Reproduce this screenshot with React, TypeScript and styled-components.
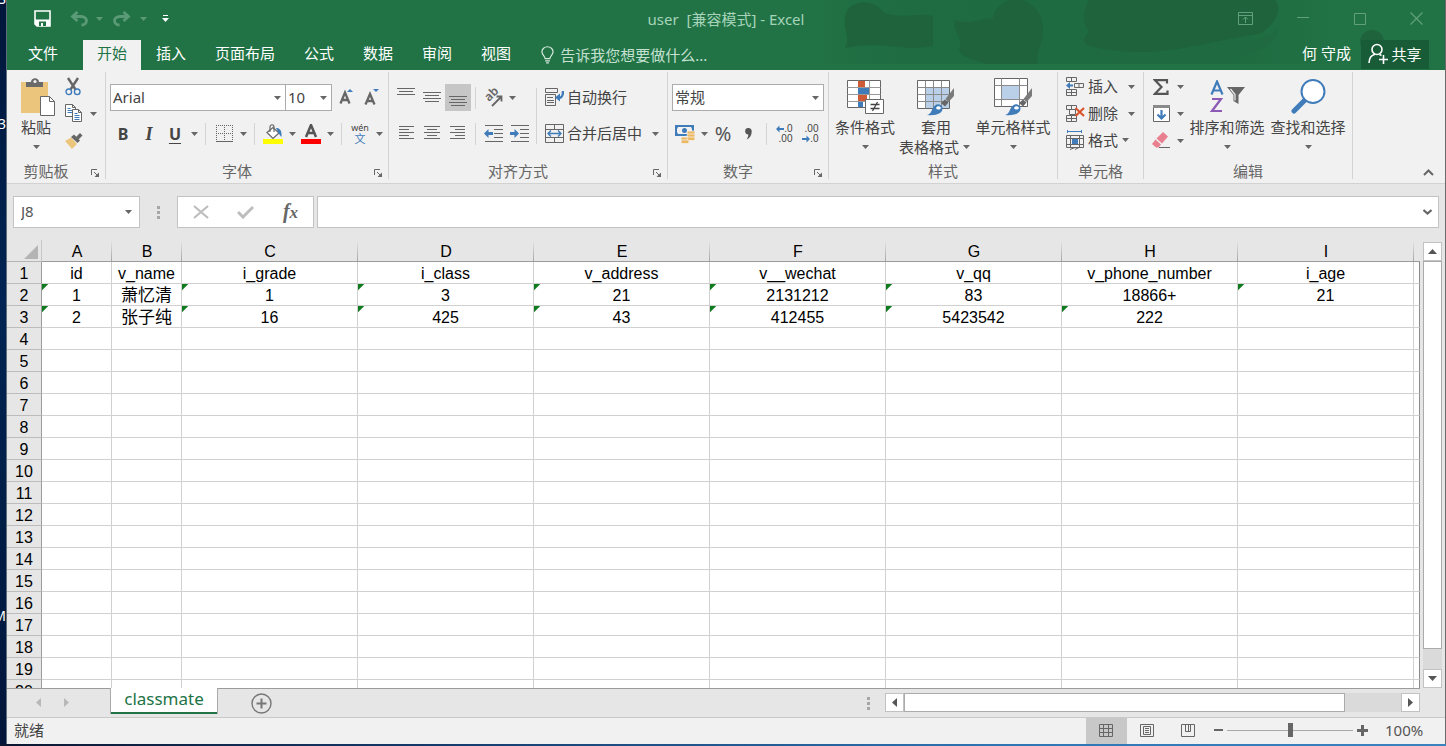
import React from "react";
import styled, { createGlobalStyle, css } from "styled-components";

const GlobalStyle = createGlobalStyle`
  *, *::before, *::after { box-sizing: border-box; }
  html, body, #root { height: 100%; }
  body {
    margin: 0;
    overflow: hidden;
    color: #444;
    font: 15px/20px "Noto Sans", "Noto Sans CJK SC", sans-serif;
  }
  button, input, select { font: inherit; color: inherit; margin: 0; }
  svg { display: block; flex: none; }
`;

/* ---------- shell ---------- */

const Desktop = styled.div`
  display: flex;
  height: 100%;
  padding-bottom: 2px;
  background: linear-gradient(90deg, #0b1630 0%, #143a6b 30%, #2f76b5 70%, #3b83bf 100%);
`;
const DesktopEdge = styled.div`
  position: relative;
  width: 7px;
  flex: none;
  overflow: hidden;
  background: linear-gradient(#00163a, #002453 40%, #001c44 75%, #03153a);
  border-right: 1px solid #5d6f7d;
`;
const DesktopText = styled.span<{ $top: number }>`
  position: absolute;
  right: 0;
  top: ${(p) => p.$top}px;
  color: #fff;
  font-size: 14px;
`;
const Window = styled.div`
  flex: 1;
  min-width: 0;
  display: flex;
  flex-direction: column;
  background: #e6e6e6;
  border-right: 1px solid #6b6b6b;
`;

const plainButton = css`
  display: flex;
  align-items: center;
  justify-content: center;
  padding: 0;
  border: 0;
  background: none;
  white-space: nowrap;
  cursor: default;
`;

/* ---------- title and tabs ---------- */

const Header = styled.header`
  position: relative;
  background: #217346;
  color: #fff;
`;
const HeaderArt = styled.svg`
  position: absolute;
  right: 0;
  top: 0;
`;
const TitleBar = styled.div`
  position: relative;
  display: grid;
  grid-template-columns: 1fr auto 1fr;
  align-items: center;
  height: 40px;
  padding-bottom: 3px;
`;
const QuickAccess = styled.div`
  display: flex;
  align-items: center;
  padding-left: 14px;
`;
const QuickButton = styled.button<{ $w: number; $dim?: boolean }>`
  ${plainButton}
  width: ${(p) => p.$w}px;
  height: 30px;
  color: ${(p) => (p.$dim ? "#5b9a76" : "#fff")};
`;
const Title = styled.h1`
  margin: 0;
  font-size: 15px;
  line-height: 20px;
  font-weight: 400;
  color: #a6d3b9;
  white-space: pre;
`;
const WindowButtons = styled.div`
  display: flex;
  justify-content: flex-end;
`;
const WindowButton = styled.button`
  ${plainButton}
  width: 57px;
  height: 36px;
  color: #62a07d;
`;
const TabBar = styled.nav`
  position: relative;
  display: flex;
  gap: 1px;
  height: 30px;
`;
const Tab = styled.button<{ $active?: boolean; $file?: boolean }>`
  ${plainButton}
  padding: 0 ${(p) => (p.$file ? 21 : 14)}px 4px;
  margin-right: ${(p) => (p.$file ? 3 : 0)}px;
  background: ${(p) => (p.$active ? "#f1f1f1" : "transparent")};
  color: ${(p) => (p.$active ? "#217346" : "#fff")};
`;
const TellMe = styled.button`
  ${plainButton}
  gap: 6px;
  margin-left: 15px;
  color: #c4e0d0;
`;
const Account = styled.button`
  ${plainButton}
  margin-left: auto;
  padding: 0 9px 4px;
  color: #fff;
`;
const Share = styled.button`
  ${plainButton}
  gap: 3px;
  width: 68px;
  height: 29px;
  padding-bottom: 2px;
  margin-right: 16px;
  background: #185c37;
  color: #fff;
`;

/* ---------- ribbon ---------- */

const Ribbon = styled.section`
  display: flex;
  flex: none;
  height: 114px;
  background: #f1f1f1;
  border-bottom: 1px solid #d2d2d2;
`;
const GroupBox = styled.div<{ $w: number }>`
  display: flex;
  flex-direction: column;
  flex: none;
  width: ${(p) => p.$w}px;
  margin: 2px 0 4px;
  border-right: 1px solid #d4d4d4;
`;
const GroupBody = styled.div<{ $pad: number }>`
  display: flex;
  flex: 1;
  padding-left: ${(p) => p.$pad}px;
`;
const GroupFoot = styled.div`
  display: flex;
  height: 18px;
  line-height: 20px;
  color: #666;
`;
const GroupName = styled.span`
  flex: 1;
  text-align: center;
`;
const Launcher = styled.button`
  ${plainButton}
  width: 20px;
  height: 24px;
`;
const Rows = styled.div`
  display: flex;
  flex-direction: column;
  gap: 9px;
  padding-top: 12px;
`;
const Row = styled.div`
  display: flex;
  align-items: center;
  height: 27px;
`;
const Stack = styled.div`
  display: flex;
  flex-direction: column;
  align-items: flex-start;
  padding-top: 1px;
`;
const Tool = styled.button<{ $on?: boolean }>`
  ${plainButton}
  width: 26px;
  height: 27px;
  background: ${(p) => (p.$on ? "#c6c6c6" : "none")};
`;
const Letter = styled.span<{ $kind: "bold" | "italic" | "underline" }>`
  font-weight: 700;
  font-size: 16px;
  ${(p) => p.$kind === "italic" && css`font-family: "Liberation Serif", serif; font-style: italic; font-size: 18px;`}
  ${(p) => p.$kind === "underline" && css`text-decoration: underline; text-underline-offset: 3px;`}
`;
const Percent = styled.span`
  font-size: 20px;
  color: #555;
`;
const DropButton = styled.button<{ $space?: number }>`
  ${plainButton}
  width: 12px;
  height: 27px;
  margin-left: ${(p) => p.$space ?? 0}px;
`;
const LabelTool = styled.button`
  ${plainButton}
  height: 27px;
  padding-bottom: 1px;
`;
const IconCell = styled.span<{ $w?: number }>`
  display: flex;
  justify-content: center;
  width: ${(p) => p.$w ?? 26}px;
`;
const Rule = styled.span<{ $gap: number; $h?: number; $top?: number }>`
  width: 1px;
  height: ${(p) => p.$h ?? 22}px;
  margin: ${(p) => p.$top ?? 0}px ${(p) => p.$gap}px 0;
  background: #d4d4d4;
`;
const BigButton = styled.button<{ $w: number }>`
  ${plainButton}
  flex-direction: column;
  justify-content: flex-start;
  width: ${(p) => p.$w}px;
  padding-top: 5px;
`;
const BigIcon = styled.span`
  display: flex;
  align-items: center;
  height: 40px;
`;
const BigLine = styled.span`
  display: flex;
  align-items: center;
  height: 20px;
`;
const Combo = styled.span<{ $w: number; $join?: boolean }>`
  position: relative;
  display: block;
  width: ${(p) => p.$w}px;
  height: 27px;
  margin-left: ${(p) => (p.$join ? -1 : 0)}px;
`;
const ComboSelect = styled.select`
  appearance: none;
  width: 100%;
  height: 100%;
  padding: 0 18px 2px 2px;
  border: 1px solid #ababab;
  border-radius: 0;
  background: #fff;
`;
const ComboArrow = styled.span`
  position: absolute;
  right: 5px;
  top: 12px;
  pointer-events: none;
`;
const Collapse = styled.button`
  ${plainButton}
  align-self: flex-end;
  width: 33px;
  height: 21px;
  margin-left: auto;
`;

/* ---------- formula bar ---------- */

const FormulaBar = styled.div`
  display: flex;
  flex: none;
  height: 56px;
  padding: 12px 6px;
`;
const Field = styled.div<{ $w?: number }>`
  display: flex;
  ${(p) => (p.$w ? css`width: ${p.$w}px; flex: none;` : css`flex: 1; min-width: 0; margin-left: 3px;`)}
  border: 1px solid #c3c3c3;
  background: #fff;
`;
const FieldInput = styled.input`
  flex: 1;
  min-width: 0;
  padding: 0 6px 2px 7px;
  border: 0;
  background: none;
  outline: none;
  color: #555;
`;
const FieldButton = styled.button<{ $w: number }>`
  ${plainButton}
  width: ${(p) => p.$w}px;
`;
const Fx = styled.span`
  font: italic 700 20px/24px "Liberation Serif", serif;
  color: #666;
`;
const FxSmall = styled.span`
  font-size: 17px;
`;
const Grip = styled.span<{ $w: number }>`
  display: flex;
  align-items: center;
  justify-content: center;
  width: ${(p) => p.$w}px;
`;

/* ---------- sheet ---------- */

const Work = styled.main`
  display: flex;
  flex: 1;
  min-height: 0;
`;
const GridView = styled.div`
  flex: 1;
  min-width: 0;
  overflow: hidden;
`;
const Table = styled.table`
  width: 100%;
  table-layout: fixed;
  border-collapse: separate;
  border-spacing: 0;
  color: #000;
  font: 16px/19px "Liberation Sans", "Noto Sans CJK SC", sans-serif;
`;
const Col = styled.col<{ $w?: number }>`
  ${(p) => p.$w && css`width: ${p.$w}px;`}
`;
const ColHead = styled.th`
  height: 22px;
  padding: 2px 0 0;
  font-weight: 400;
  background: linear-gradient(#e6e6e6, #a5a5a5) right / 1px 100% no-repeat, #e6e6e6;
  border-bottom: 1px solid #9b9b9b;
  &:last-child { background: #e6e6e6; }
`;
const Corner = styled(ColHead)`
  background: #e6e6e6;
  border-bottom-color: #b5b5b5;
  border-right: 1px solid #c6c6c6;
`;
const CornerMark = styled.svg`
  margin-left: auto;
  margin-right: 3px;
`;
const RowHead = styled.th`
  height: 22px;
  padding: 2px 0 0;
  font-weight: 400;
  background: #e6e6e6;
  border-right: 1px solid #9b9b9b;
  border-bottom: 1px solid #bcbcbc;
`;
const Cell = styled.td<{ $flag?: boolean }>`
  height: 22px;
  padding: 2px 0 0;
  overflow: hidden;
  text-align: center;
  white-space: nowrap;
  background: ${(p) => (p.$flag ? "linear-gradient(135deg, #0f7b1f 4px, transparent 5px) #fff" : "#fff")};
  border-right: 1px solid #d0d0d0;
  border-bottom: 1px solid #d0d0d0;
  &:last-child { border-right-color: #8c8c8c; }
  &:lang(zh) { font-size: 17px; }
`;
const ScrollColumn = styled.div`
  display: flex;
  flex-direction: column;
  flex: none;
  width: 25px;
  padding: 2px 3px 0;
`;
const ScrollButton = styled.button`
  ${plainButton}
  flex: none;
  width: 19px;
  height: 19px;
  background: #fff;
  border: 1px solid #c2c2c2;
`;
const VTrack = styled.div`
  display: flex;
  flex-direction: column;
  flex: 1;
  background: #dadada;
`;
const VThumb = styled.div`
  height: 95%;
  background: #fff;
  border: 1px solid #ababab;
`;

/* ---------- sheet tabs and status ---------- */

const SheetBar = styled.div`
  display: flex;
  flex: none;
  height: 29px;
`;
const SheetLeft = styled.div`
  display: flex;
  flex: 1;
  border-top: 1px solid #9b9b9b;
`;
const SheetNav = styled.div`
  display: flex;
  width: 103px;
  padding-left: 17px;
  padding-bottom: 1px;
`;
const NavButton = styled.button`
  ${plainButton}
  width: 28px;
`;
const SheetTab = styled.button`
  ${plainButton}
  width: 108px;
  height: 26px;
  margin-top: -1px;
  background: #fff;
  border: solid #ababab;
  border-width: 0 1px;
  box-shadow: inset 0 -2px #217346;
  color: #217346;
  font-size: 17px;
  padding-bottom: 5px;
`;
const AddSheet = styled.button`
  ${plainButton}
  width: 86px;
`;
const SheetRight = styled.div`
  display: flex;
  border-top: 1px solid #9b9b9b;
`;
const HScroll = styled.div`
  display: flex;
  width: 535px;
  padding-top: 4px;
`;
const HTrack = styled.div`
  flex: 1;
  height: 19px;
  background: #dadada;
`;
const HThumb = styled.div`
  width: 441px;
  height: 19px;
  background: #fff;
  border: 1px solid #ababab;
`;
const SheetEnd = styled.div`
  width: 25px;
`;
const Status = styled.footer`
  display: flex;
  align-items: center;
  flex: none;
  height: 27px;
  padding-left: 7px;
  background: #f1f1f1;
  border-top: 1px solid #c9c9c9;
`;
const StatusText = styled.span`
  margin-right: auto;
  padding-bottom: 3px;
`;
const ViewButton = styled.button<{ $on?: boolean }>`
  ${plainButton}
  width: 41px;
  height: 26px;
  padding: 0 2px 2px 0;
  background: ${(p) => (p.$on ? "#c8c8c8" : "none")};
`;
const ZoomStep = styled.button`
  ${plainButton}
  width: 18px;
  height: 26px;
  padding-bottom: 2px;
`;
const ZoomRange = styled.input`
  appearance: none;
  width: 126px;
  height: 20px;
  margin-bottom: 2px;
  background: linear-gradient(#a8a8a8, #a8a8a8) center / 100% 1px no-repeat;
  &::-webkit-slider-thumb {
    appearance: none;
    width: 5px;
    height: 14px;
    background: #666;
  }
`;
const ZoomValue = styled.span`
  width: 74px;
  padding: 0 0 2px 14px;
  color: #555;
`;

/* ---------- drawings ---------- */

const G = "#666";
const B = "#3f7cb9";

const Caret = ({ color = G }: { color?: string }) => (
  <svg width="7" height="4" viewBox="0 0 7 4"><path d="M0 0h7L3.5 4z" fill={color} /></svg>
);

const LauncherIcon = () => (
  <svg width="8" height="8" viewBox="0 0 8 8" fill="none" stroke={G}>
    <path d="M.5 6V.5H6M3 3l3 3" /><path d="M8 3.5V8H3.5z" fill={G} stroke="none" />
  </svg>
);

const Lines = ({ widths, align }: { widths: number[]; align: "left" | "center" | "right" }) => (
  <svg width="18" height={widths.length * 3} viewBox={`0 0 18 ${widths.length * 3}`} fill={G} shapeRendering="crispEdges">
    {widths.map((w, i) => (
      <rect key={i} x={align === "left" ? 2 : align === "right" ? 16 - w : (18 - w) / 2} y={i * 3} width={w} height="1" />
    ))}
  </svg>
);

const VerticalAlign = ({ y }: { y: number }) => (
  <svg width="18" height="27" viewBox="0 0 18 27" fill={G} shapeRendering="crispEdges">
    <rect x="0" y={y} width="18" height="1" /><rect x="2" y={y + 3} width="14" height="1" /><rect x="0" y={y + 6} width="18" height="1" />
    {y > 4 && <rect x="2" y={y + 9} width="14" height="1" />}
  </svg>
);

const SaveIcon = () => (
  <svg width="17" height="17" viewBox="0 0 17 17">
    <path d="M1 1h15v15H3l-2-2z" fill="none" stroke="#fff" strokeWidth="1.600" />
    <path d="M1 9.500h15V16H3l-2-2z" fill="#fff" /><path d="M5 11.500h7V16H5z" fill="#217346" /><path d="M7 13h2v3H7z" fill="#fff" />
  </svg>
);

const UndoIcon = ({ flip }: { flip?: boolean }) => (
  <svg width="19" height="16" viewBox="0 0 19 16" fill="none" stroke="currentColor" strokeWidth="2.800">
    <g transform={flip ? "translate(19 0) scale(-1 1)" : undefined}>
      <path d="M7.500 1L2.500 5.500l5 4.500M3 5.500h8c3.500 0 5.500 2 5.500 4.300s-2 4.200-5 4.200" />
    </g>
  </svg>
);

const PersonIcon = () => (
  <svg width="20" height="21" viewBox="0 0 20 21" fill="none" stroke="#fff" strokeWidth="1.600">
    <circle cx="9" cy="6.500" r="5" /><path d="M1 20c.2-5 2.500-8 6-8.800M11.500 11.500l2 1M15.500 12v9M11 16.500h9" />
  </svg>
);

const BulbIcon = () => (
  <svg width="13" height="18" viewBox="0 0 14 19" fill="none" stroke="#d6eade" strokeWidth="1.300">
    <path d="M4.500 13.500c0-3-3.500-4-3.500-7.500a6 5.400 0 0 1 12 0c0 3.500-3.500 4.500-3.500 7.500zM4.500 15.800h5M5.500 18h3" />
  </svg>
);

const PasteIcon = () => (
  <svg width="38" height="39" viewBox="-4 0 38 39">
    <path d="M0 4h27v31H0z" fill="#ecc57c" />
    <path d="M5 9V4h5c0-5 8-5 8 0h4v5z" fill="#6a6a6a" /><circle cx="14" cy="3.500" r="1.600" fill="#f1f1f1" />
    <path d="M19.500 18.500h9l5 5v14h-14z" fill="#fff" stroke={G} /><path d="M28.500 18.500v5h5" fill="none" stroke={G} />
  </svg>
);

const CutIcon = () => (
  <svg width="18" height="19" viewBox="0 0 18 19" fill="none">
    <path d="M3 1l7.500 11.500M13 1L5.500 12.500" stroke="#666" strokeWidth="2.400" />
    <circle cx="3.800" cy="14.800" r="2.800" stroke={B} strokeWidth="1.400" /><circle cx="12.200" cy="14.800" r="2.800" stroke={B} strokeWidth="1.400" />
  </svg>
);

const CopyIcon = () => (
  <svg width="18" height="19" viewBox="0 0 18 19" fill="#fff" stroke={G}>
    <path d="M.5.500h7l3 3v9H.5zM7.500.500v3h3" /><path d="M2.500 4.500h3M2.500 6.500h5M2.500 8.500h5" stroke={B} />
    <path d="M7.500 5.500h6l3 3v9h-9zM13.500 5.500v3h3" /><path d="M9.500 9.500h3M9.500 11.500h5M9.500 13.500h5M9.500 15.500h5" stroke={B} />
  </svg>
);

const BrushIcon = () => (
  <svg width="18" height="16" viewBox="0 0 18 16">
    <path d="M0 8l6-3.500L12 11l-5 5z" fill="#ecc57c" /><path d="M6 4l3-2.500 6 6L12.500 10z" fill={G} /><path d="M11 4l4-4 2.500 2.500-4 4z" fill={G} />
  </svg>
);

const FontSizeIcon = ({ down }: { down?: boolean }) => (
  <svg width="16" height="17" viewBox="0 0 16 17">
    <path d={down ? "M2.500 15.500L7 5l4.500 10.500M4 12h6" : "M3.500 14.500L8 3.500l4.500 11M5 11h6"} fill="none" stroke={G} strokeWidth="2.300" />
    <path d={down ? "M10 0h6l-3 3z" : "M10 3h6l-3-3z"} fill={B} />
  </svg>
);

const BorderIcon = () => (
  <svg width="17" height="17" viewBox="0 0 17 17" fill="none" stroke={G} shapeRendering="crispEdges">
    <path d="M.5 0v16M8.500 0v16M16.500 0v16M0 .5h17M0 8.500h17" strokeDasharray="1 1" /><path d="M0 16.500h17" />
  </svg>
);

const FillIcon = () => (
  <svg width="20" height="20" viewBox="0 0 20 20" fill="none">
    <path d="M0 15h20v5H0z" fill="#ff0" /><path d="M4 8.500l6-5 6 5.500-6 5.500z" fill="#fff" stroke={G} strokeWidth="1.200" />
    <path d="M7 8V3c0-3 4-3 4 0v5" stroke={G} strokeWidth="1.200" /><path d="M13 4c4 0 6 2.500 5.500 9-1.500-1-2-3-3.500-5z" fill={B} />
  </svg>
);

const FontColorIcon = () => (
  <svg width="20" height="20" viewBox="0 0 20 20">
    <path d="M5 13L10 1l5 12M7 9h6" fill="none" stroke="#555" strokeWidth="2.500" /><path d="M0 15h20v5H0z" fill="#f00" />
  </svg>
);

const PhoneticBox = styled.span`
  display: flex;
  flex-direction: column;
  align-items: center;
  font-size: 9px;
  line-height: 10px;
`;
const PhoneticHan = styled.span`
  font-size: 11px;
  line-height: 12px;
  color: ${B};
`;

const OrientIcon = () => (
  <svg width="20" height="19" viewBox="0 0 20 19">
    <text x="0" y="0" transform="translate(6 14) rotate(-45)" fontSize="12" fontWeight="600" fill={G}>ab</text>
    <path d="M9 18l9-9M13.500 8.500h5v5" fill="none" stroke={G} strokeWidth="1.800" />
  </svg>
);

const IndentIcon = ({ right }: { right?: boolean }) => (
  <svg width="19" height="17" viewBox="0 0 19 17">
    <path d="M1 .5h18M10 4.500h9M10 8.500h9M10 12.500h9M1 16.500h18" stroke={G} />
    <path d={right ? "M9 8.500L4.500 4v3H0v3h4.500v3z" : "M0 8.500L4.500 4v3H9v3H4.500v3z"} fill={B} />
  </svg>
);

const WrapIcon = () => (
  <svg width="19" height="18" viewBox="0 0 19 18" fill="none" stroke={G}>
    <path d="M11 .5H.5v4h12v-4zM.5 6.500h10v11H.5zM2 9.500h6M2 12.500h7M2 14.500h7" />
    <path d="M18 3c0 5-1 7-5 7" stroke={B} strokeWidth="2.400" /><path d="M10 9.500l5-4v8z" fill={B} stroke="none" />
  </svg>
);

const MergeIcon = () => (
  <svg width="19" height="19" viewBox="0 0 19 19" fill="none" stroke={G}>
    <path d="M.5.500h18v18H.5zM.5 5.500h18M.5 13.500h18M9.500.500v5M9.500 13.500v5" /><path d="M3 9.500h13M6 6.500l-3 3 3 3M13 6.500l3 3-3 3" stroke={B} strokeWidth="1.400" />
  </svg>
);

const CurrencyIcon = () => (
  <svg width="20" height="20" viewBox="0 0 20 20">
    <path d="M0 1h19v11H0z" fill={B} /><path d="M3 3h13l1 2v3l-2 2H3L2 8V5z" fill="#f1f1f1" /><circle cx="9.500" cy="6.500" r="2.500" fill={B} />
    <g fill="#ecb861" stroke="#f1f1f1" strokeWidth=".8"><rect x="12" y="7" width="8" height="3.500" rx="1.500" /><rect x="12" y="10" width="8" height="3.500" rx="1.500" /><rect x="6" y="13" width="8" height="3.500" rx="1.500" /><rect x="12" y="13" width="8" height="3.500" rx="1.500" /><rect x="6" y="16" width="8" height="3.500" rx="1.500" /></g>
  </svg>
);

const CommaIcon = () => (
  <svg width="8" height="12" viewBox="0 0 8 12"><path d="M3.500 0a3.200 3.200 0 0 1 3.200 3.500c0 4-2 6.500-5 8 1.200-2 1.700-3.500 1.600-5A3.200 3.200 0 0 1 3.500 0z" fill="#555" /></svg>
);

const DecimalBox = styled.span`
  display: flex;
  flex-direction: column;
  align-items: flex-end;
  width: 17px;
  font: 10px/10px "Liberation Sans", sans-serif;
  color: #444;
`;
const DecimalLine = styled.span`
  display: flex;
  align-items: center;
  height: 10px;
`;
const DecimalIcon = ({ less }: { less?: boolean }) => {
  const arrow = (
    <svg width="8" height="8" viewBox="0 0 8 8"><path d={less ? "M8 4L4.500.500V3H0v2h4.500v2.500z" : "M0 4L3.500.500V3H8v2H3.500v2.500z"} fill={B} /></svg>
  );
  return (
    <DecimalBox>
      <DecimalLine>{less ? ".00" : <>{arrow}.0</>}</DecimalLine>
      <DecimalLine>{less ? <>{arrow}.0</> : ".00"}</DecimalLine>
    </DecimalBox>
  );
};

const ConditionalIcon = () => (
  <svg width="37" height="34" viewBox="0 0 37 34" fill="none">
    <path d="M.5.500h33v27H.5z" fill="#fff" stroke={G} /><path d="M.5 7.500h33M.5 14.500h33M.5 21.500h33M11.500.500v27M22.500.500v27" stroke="#999" />
    <path d="M11 1h7v6h-7zM11 15h9v6h-9z" fill="#cf5b36" /><path d="M11 8h11v6H11zM11 22h5v5h-5z" fill={B} />
    <path d="M18.500 19.500h18v14h-18z" fill="#fff" stroke={G} /><path d="M23.500 24.500h9M23.500 28.500h9M30.500 22l-5 9" stroke="#444" strokeWidth="1.300" />
  </svg>
);

const PaintBrush = () => (
  <g>
    <path d="M37 9L28.500 20l3 3L37 17z" fill="#7a7a7a" /><path d="M28 20.500l3.500 3-3.500 4-4-3.500z" fill={G} />
    <path d="M10 36c5-1 4-6 8-9.500 3-2.500 7-.5 7.500 2.500C26 34 20 37 10 36z" fill={B} /><path d="M19 29c1-2.500 4-2.500 5 0-1 2-4 2-5 0z" fill="#fff" />
  </g>
);

const TableFormatIcon = () => (
  <svg width="38" height="37" viewBox="0 0 38 37" fill="none">
    <path d="M.5 1.500h32v28H.5z" fill="#fff" stroke={G} /><path d="M9 9h23v20H9z" fill="#b9d0e8" />
    <path d="M.5 8.500h32M.5 15.500h32M.5 22.500h32M8.500 1.500v28M16.500 1.500v28M24.500 1.500v28" stroke="#8b8b8b" /><PaintBrush />
  </svg>
);

const CellStyleIcon = () => (
  <svg width="38" height="38" viewBox="0 0 38 38" fill="none">
    <path d="M.5.500h33v28H.5z" fill="#fff" stroke={G} /><path d="M8 8h17v13H8z" fill="#b9d0e8" />
    <path d="M.5 7.500h33M.5 21.500h33M7.500.500v28M25.500.500v28" stroke="#8b8b8b" /><g transform="translate(1 1)"><PaintBrush /></g>
  </svg>
);

const InsertIcon = () => (
  <svg width="18" height="19" viewBox="0 0 18 19" fill="none" stroke={G}>
    <path d="M.5.500h10v4H.5zM5.500.500v4M.5 12.500h10v6H.5zM5.500 12.500v6M.5 15.500h10M8.500 6.500h9v4h-9zM13 6.500v4" /><path d="M0 8.500L4 5v2.500h3v2H4V12z" fill={B} stroke="none" />
  </svg>
);

const DeleteIcon = () => (
  <svg width="19" height="17" viewBox="0 0 19 17" fill="none" stroke={G}>
    <path d="M.5.500h10v4H.5zM5.500.500v4M3.500 4.500h6v5h-6zM.5 10.500h10v6H.5zM5.500 10.500v6M.5 13.500h10" /><path d="M9.500 3l8.500 8M18 3l-8.500 8" stroke="#d9532c" strokeWidth="2.200" />
  </svg>
);

const FormatIcon = () => (
  <svg width="18" height="20" viewBox="0 0 18 20" fill="none" stroke={G}>
    <path d="M1 1.500h15M1.500 0v3M15.500 0v3" stroke={B} /><path d="M.5 5.500h17v12H.5zM4.500 5.500v12M13.500 5.500v12M.5 8.500h17M.5 14.500h17M4 19.500l5-2M9 19.500l4-2" /><path d="M6 9h6v5H6z" fill={B} stroke="none" />
  </svg>
);

const SigmaIcon = () => (
  <svg width="16" height="16" viewBox="0 0 16 16"><path d="M14 4.500V1.200H2l6.500 6.800L2 14.800h12.500v-3.300" fill="none" stroke="#555" strokeWidth="2.200" /></svg>
);

const FillDownIcon = () => (
  <svg width="17" height="17" viewBox="0 0 17 17" fill="none">
    <path d="M.5.500h16v16H.5z" fill="#fff" stroke={G} /><path d="M0 0h17v3H0z" fill="#8a8a8a" /><path d="M8.500 5v8M4.500 9.500l4 4 4-4" stroke={B} strokeWidth="2.200" />
  </svg>
);

const EraserIcon = () => (
  <svg width="18" height="17" viewBox="0 0 18 17">
    <path d="M11 0l5 4.500-6 7-5.500-5z" fill="#e8808f" /><path d="M3.500 7.500l5.500 5-2.500 3H4L0 12z" fill="#e8808f" /><path d="M7 15.500h11" stroke={G} />
  </svg>
);

const SortIcon = () => (
  <svg width="36" height="34" viewBox="0 0 36 34" fill="none">
    <path d="M2.500 14.500L8 1.500l5.500 13M4.500 10.500h7" stroke={B} strokeWidth="2.200" /><path d="M3 19h9L3 31h10" stroke="#8c59b5" strokeWidth="2.200" />
    <path d="M18 7h18l-6.500 8v9l-5-3v-6z" fill={G} /><path d="M21.500 9l4.500 5.500v6" stroke="#f1f1f1" strokeWidth="1.200" />
  </svg>
);

const FindIcon = () => (
  <svg width="35" height="36" viewBox="0 1 35 36"><path d="M13.500 22.500L3 33" stroke={B} strokeWidth="5" strokeLinecap="round" /><circle cx="22" cy="13.500" r="11.500" fill="#fff" stroke={B} strokeWidth="2" /></svg>
);

const Arrow = ({ dir, color = "#555" }: { dir: "up" | "down" | "left" | "right"; color?: string }) => {
  const shape = { up: "M0 7h9L4.500 2z", down: "M0 2h9L4.500 7z", left: "M7 0v9L2 4.500z", right: "M2 0v9l5-4.500z" }[dir];
  return <svg width="9" height="9" viewBox="0 0 9 9"><path d={shape} fill={color} /></svg>;
};

const Dots = () => (
  <svg width="3" height="13" viewBox="0 0 3 13" fill="#a6a6a6"><path d="M0 0h3v3H0zM0 5h3v3H0zM0 10h3v3H0z" /></svg>
);

/* ---------- parts ---------- */

type GroupProps = { name: string; width: number; pad?: number; launcher?: boolean; children: React.ReactNode };
const Group = ({ name, width, pad = 4, launcher, children }: GroupProps) => (
  <GroupBox $w={width}>
    <GroupBody $pad={pad}>{children}</GroupBody>
    <GroupFoot>
      <GroupName>{name}</GroupName>
      {launcher && <Launcher aria-label={`${name}设置`}><LauncherIcon /></Launcher>}
    </GroupFoot>
  </GroupBox>
);

const Drop = ({ label, space }: { label: string; space?: number }) => (
  <DropButton aria-label={label} $space={space}><Caret /></DropButton>
);

const ComboBox = ({ label, value, width, join }: { label: string; value: string; width: number; join?: boolean }) => (
  <Combo $w={width} $join={join}>
    <ComboSelect aria-label={label} defaultValue={value}><option>{value}</option></ComboSelect>
    <ComboArrow><Caret /></ComboArrow>
  </Combo>
);

const Big = ({ icon, text, width }: { icon: React.ReactNode; text: string; width: number }) => (
  <BigButton $w={width}><BigIcon>{icon}</BigIcon><BigLine>{text}</BigLine><BigLine><Caret /></BigLine></BigButton>
);

const SheetScroll = () => (
  <SheetRight>
    <Grip $w={34}><Dots /></Grip>
    <HScroll>
      <ScrollButton aria-label="向左滚动"><Arrow dir="left" /></ScrollButton>
      <HTrack><HThumb /></HTrack>
      <ScrollButton aria-label="向右滚动"><Arrow dir="right" /></ScrollButton>
    </HScroll>
  </SheetRight>
);

const tabs = ["插入", "页面布局", "公式", "数据", "审阅", "视图"];
const columns = ["A", "B", "C", "D", "E", "F", "G", "H", "I"];
const columnWidths = [35, 70, 70, 176, 176, 176, 176, 176, 176, 176];
const sheet: string[][] = [
  ["id", "v_name", "i_grade", "i_class", "v_address", "v__wechat", "v_qq", "v_phone_number", "i_age"],
  ["1", "萧忆清", "1", "3", "21", "2131212", "83", "18866+", "21"],
  ["2", "张子纯", "16", "425", "43", "412455", "5423542", "222", ""],
];
const flags: Record<number, number[]> = { 1: [0, 2, 3, 4, 5, 6, 8], 2: [0, 2, 3, 4, 5, 6, 7] };
const rowNumbers = Array.from({ length: 20 }, (_, i) => i);

export default function App() {
  return (
    <>
      <GlobalStyle />
      <Desktop>
        <DesktopEdge aria-hidden>
          <DesktopText $top={-11}>S</DesktopText>
          <DesktopText $top={114}>3</DesktopText>
          <DesktopText $top={606}>M</DesktopText>
        </DesktopEdge>
        <Window>
          <Header>
            <HeaderArt width="640" height="64" viewBox="0 0 640 64" aria-hidden>
              <defs>
                <linearGradient id="shade"><stop offset="0" stopColor="#1f6a40" stopOpacity="0" /><stop offset=".15" stopColor="#1f6c42" /><stop offset=".65" stopColor="#1f6a40" /><stop offset=".85" stopColor="#217346" /></linearGradient>
              </defs>
              <path d="M0 0h640v64H0z" fill="url(#shade)" />
              <g fill="#1f633c">
                <path d="M40 18C42-2 70-2 78 12c18 8 34 0 50 4v30c-30 6-52-6-88 2 6-10-2-18 0-30z" />
                <path d="M150 20c14 6 26-2 38-2 4-26 46-26 50 8 2 14-6 20-6 38h-52c-8-4-24-6-26-14 6-10-8-20-4-30z" />
                <path d="M284 0h186c10 12-4 28-16 34-60 8-100 28-170 12-8-4-4-10 0-14-8-10-6-20 0-32z" />
              </g>
              <path d="M390 48c20-8 62 0 84-20-4 24-40 34-84 20z" fill="#1f6a40" />
              <circle cx="567" cy="42" r="12" fill="#1f633c" />
            </HeaderArt>
            <TitleBar>
              <QuickAccess>
                <QuickButton $w={42} aria-label="保存"><SaveIcon /></QuickButton>
                <QuickButton $w={32} $dim aria-label="撤消"><UndoIcon /></QuickButton>
                <QuickButton $w={8} $dim aria-label="撤消列表"><Caret color="#5b9a76" /></QuickButton>
                <QuickButton $w={36} $dim aria-label="恢复"><UndoIcon flip /></QuickButton>
                <QuickButton $w={8} $dim aria-label="恢复列表"><Caret color="#5b9a76" /></QuickButton>
                <QuickButton $w={36} aria-label="自定义快速访问工具栏">
                  <svg width="7" height="8" viewBox="0 0 7 8" fill="#fff"><path d="M1 0h5v1H1zM0 3h7L3.500 7z" /></svg>
                </QuickButton>
              </QuickAccess>
              <Title>{"user  [兼容模式] - Excel"}</Title>
              <WindowButtons>
                <WindowButton aria-label="功能区显示选项"><svg width="15" height="13" viewBox="0 0 15 13" fill="none" stroke="currentColor"><path d="M.5.500h14v12H.5zM.5 3.500h14M7.500 11V5M5 7.500L7.500 5 10 7.500" /></svg></WindowButton>
                <WindowButton aria-label="最小化"><svg width="12" height="3" viewBox="0 0 12 3" fill="none" stroke="currentColor"><path d="M0 .5h12" /></svg></WindowButton>
                <WindowButton aria-label="最大化"><svg width="12" height="12" viewBox="0 0 12 12" fill="none" stroke="currentColor"><path d="M.5.500h11v11H.5z" /></svg></WindowButton>
                <WindowButton aria-label="关闭"><svg width="13" height="13" viewBox="0 0 13 13" fill="none" stroke="currentColor" strokeWidth="1.200"><path d="M.5.500l12 12M12.500.500l-12 12" /></svg></WindowButton>
              </WindowButtons>
            </TitleBar>
            <TabBar>
              <Tab $file>文件</Tab>
              <Tab $active>开始</Tab>
              {tabs.map((t) => <Tab key={t}>{t}</Tab>)}
              <TellMe><BulbIcon />告诉我您想要做什么...</TellMe>
              <Account>何 守成</Account>
              <Share><PersonIcon />共享</Share>
            </TabBar>
          </Header>

          <Ribbon>
            <Group name="剪贴板" width={99} launcher>
              <Big icon={<PasteIcon />} text="粘贴" width={50} />
              <Stack>
                <Tool aria-label="剪切"><CutIcon /></Tool>
                <Row><Tool aria-label="复制"><CopyIcon /></Tool><Drop label="复制选项" /></Row>
                <Tool aria-label="格式刷"><BrushIcon /></Tool>
              </Stack>
            </Group>

            <Group name="字体" width={283} launcher>
              <Rows>
                <Row>
                  <ComboBox label="字体" value="Arial" width={176} />
                  <ComboBox label="字号" value="10" width={47} join />
                  <Tool aria-label="增大字号"><FontSizeIcon /></Tool>
                  <Tool aria-label="减小字号"><FontSizeIcon down /></Tool>
                </Row>
                <Row>
                  <Tool aria-label="加粗"><Letter $kind="bold">B</Letter></Tool>
                  <Tool aria-label="倾斜"><Letter $kind="italic">I</Letter></Tool>
                  <Tool aria-label="下划线"><Letter $kind="underline">U</Letter></Tool>
                  <Drop label="下划线选项" />
                  <Rule $gap={5} />
                  <Tool aria-label="边框"><BorderIcon /></Tool><Drop label="边框选项" />
                  <Rule $gap={5} />
                  <Tool aria-label="填充颜色"><FillIcon /></Tool><Drop label="填充颜色选项" />
                  <Tool aria-label="字体颜色"><FontColorIcon /></Tool><Drop label="字体颜色选项" />
                  <Rule $gap={5} />
                  <Tool aria-label="拼音"><PhoneticBox>wén<PhoneticHan>文</PhoneticHan></PhoneticBox></Tool><Drop label="拼音选项" />
                </Row>
              </Rows>
            </Group>

            <Group name="对齐方式" width={279} launcher>
              <Rows>
                <Row>
                  <Tool aria-label="顶端对齐"><VerticalAlign y={4} /></Tool>
                  <Tool aria-label="垂直居中"><VerticalAlign y={8} /></Tool>
                  <Tool $on aria-label="底端对齐"><VerticalAlign y={12} /></Tool>
                  <Rule $gap={4} />
                  <Tool aria-label="方向"><OrientIcon /></Tool><Drop label="方向选项" />
                </Row>
                <Row>
                  <Tool aria-label="左对齐"><Lines align="left" widths={[15, 10, 15, 10, 15]} /></Tool>
                  <Tool aria-label="居中"><Lines align="center" widths={[16, 10, 16, 10, 16]} /></Tool>
                  <Tool aria-label="右对齐"><Lines align="right" widths={[15, 10, 15, 10, 15]} /></Tool>
                  <Rule $gap={4} />
                  <Tool aria-label="减少缩进量"><IndentIcon /></Tool>
                  <Tool aria-label="增加缩进量"><IndentIcon right /></Tool>
                </Row>
              </Rows>
              <Rule $gap={4} $h={56} $top={16} />
              <Rows>
                <Row><LabelTool><IconCell><WrapIcon /></IconCell>自动换行</LabelTool></Row>
                <Row><LabelTool><IconCell><MergeIcon /></IconCell>合并后居中</LabelTool><Drop label="合并选项" space={7} /></Row>
              </Rows>
            </Group>

            <Group name="数字" width={161} launcher>
              <Rows>
                <Row><ComboBox label="数字格式" value="常规" width={152} /></Row>
                <Row>
                  <Tool aria-label="会计数字格式"><CurrencyIcon /></Tool><Drop label="会计格式选项" />
                  <Tool aria-label="百分比样式"><Percent>%</Percent></Tool>
                  <Tool aria-label="千位分隔样式"><CommaIcon /></Tool>
                  <Rule $gap={4} />
                  <Tool aria-label="增加小数位数"><DecimalIcon /></Tool>
                  <Tool aria-label="减少小数位数"><DecimalIcon less /></Tool>
                </Row>
              </Rows>
            </Group>

            <Group name="样式" width={229} pad={2}>
              <Big icon={<ConditionalIcon />} text="条件格式" width={68} />
              <BigButton $w={74}>
                <BigIcon><TableFormatIcon /></BigIcon>
                <BigLine>套用</BigLine>
                <BigLine>表格格式<IconCell $w={14}><Caret /></IconCell></BigLine>
              </BigButton>
              <Big icon={<CellStyleIcon />} text="单元格样式" width={80} />
            </Group>

            <Group name="单元格" width={86}>
              <Stack>
                <Row><LabelTool><IconCell><InsertIcon /></IconCell>插入</LabelTool><Drop label="插入选项" space={7} /></Row>
                <Row><LabelTool><IconCell><DeleteIcon /></IconCell>删除</LabelTool><Drop label="删除选项" space={7} /></Row>
                <LabelTool><IconCell><FormatIcon /></IconCell>格式<IconCell $w={14}><Caret /></IconCell></LabelTool>
              </Stack>
            </Group>

            <Group name="编辑" width={209}>
              <Stack>
                <Row><Tool aria-label="自动求和"><SigmaIcon /></Tool><Drop label="求和选项" /></Row>
                <Row><Tool aria-label="填充"><FillDownIcon /></Tool><Drop label="填充选项" /></Row>
                <Row><Tool aria-label="清除"><EraserIcon /></Tool><Drop label="清除选项" /></Row>
              </Stack>
              <Big icon={<SortIcon />} text="排序和筛选" width={82} />
              <Big icon={<FindIcon />} text="查找和选择" width={80} />
            </Group>
            <Collapse aria-label="折叠功能区"><svg width="11" height="7" viewBox="0 0 11 7" fill="none" stroke={G} strokeWidth="2"><path d="M1 6l4.500-4.500L10 6" /></svg></Collapse>
          </Ribbon>

          <FormulaBar>
            <Field $w={127}>
              <FieldInput aria-label="名称框" defaultValue="J8" />
              <FieldButton $w={22} aria-label="名称列表"><Caret /></FieldButton>
            </Field>
            <Grip $w={37}><Dots /></Grip>
            <Field $w={137}>
              <FieldButton $w={45} aria-label="取消"><svg width="16" height="14" viewBox="0 0 16 14" stroke="#bdbdbd" strokeWidth="2.200"><path d="M1 1l14 12M15 1L1 13" /></svg></FieldButton>
              <FieldButton $w={45} aria-label="输入"><svg width="17" height="14" viewBox="0 0 17 14" fill="none" stroke="#bdbdbd" strokeWidth="3"><path d="M1 7l5 5L16 2" /></svg></FieldButton>
              <FieldButton $w={45} aria-label="插入函数"><Fx>f<FxSmall>x</FxSmall></Fx></FieldButton>
            </Field>
            <Field>
              <FieldInput aria-label="编辑栏" />
              <FieldButton $w={21} aria-label="展开编辑栏"><svg width="9" height="6" viewBox="0 0 9 6" fill="none" stroke="#666" strokeWidth="2.200"><path d="M.5 1l4 3.500 4-3.500" /></svg></FieldButton>
            </Field>
          </FormulaBar>

          <Work>
            <GridView>
              <Table>
                <colgroup>
                  {columnWidths.map((w, i) => <Col key={i} $w={w} />)}
                  <Col />
                </colgroup>
                <thead>
                  <tr>
                    <Corner aria-label="全选"><CornerMark width="14" height="14" viewBox="0 0 14 14"><path d="M14 0v14H0z" fill="#b4b4b4" /></CornerMark></Corner>
                    {columns.map((c) => <ColHead key={c} scope="col">{c}</ColHead>)}
                    <ColHead scope="col" />
                  </tr>
                </thead>
                <tbody>
                  {rowNumbers.map((r) => (
                    <tr key={r}>
                      <RowHead scope="row">{r + 1}</RowHead>
                      {columns.map((c, i) => (
                        <Cell key={c} lang={i === 1 && r > 0 ? "zh-CN" : "en"} $flag={flags[r]?.includes(i)}>{sheet[r]?.[i]}</Cell>
                      ))}
                      <Cell />
                    </tr>
                  ))}
                </tbody>
              </Table>
            </GridView>
            <ScrollColumn>
              <ScrollButton aria-label="向上滚动"><Arrow dir="up" /></ScrollButton>
              <VTrack><VThumb /></VTrack>
              <ScrollButton aria-label="向下滚动"><Arrow dir="down" /></ScrollButton>
            </ScrollColumn>
          </Work>

          <SheetBar>
            <SheetLeft>
              <SheetNav>
                <NavButton aria-label="上一张工作表"><Arrow dir="left" color="#b8b8b8" /></NavButton>
                <NavButton aria-label="下一张工作表"><Arrow dir="right" color="#b8b8b8" /></NavButton>
              </SheetNav>
              <SheetTab>classmate</SheetTab>
              <AddSheet aria-label="新工作表"><svg width="21" height="21" viewBox="0 0 21 21" fill="none" stroke="#777"><circle cx="10.500" cy="10.500" r="9.500" strokeWidth="1.400" /><path d="M10.500 5.500v10M5.500 10.500h10" strokeWidth="2" /></svg></AddSheet>
            </SheetLeft>
            <SheetScroll />
            <SheetEnd />
          </SheetBar>

          <Status>
            <StatusText>就绪</StatusText>
            <ViewButton $on aria-label="普通"><svg width="14" height="13" viewBox="0 0 14 13" fill="none" stroke={G}><path d="M.5.500h13v12H.5zM.5 4.500h13M.5 8.500h13M4.500.500v12M9.500.500v12" /></svg></ViewButton>
            <ViewButton aria-label="页面布局视图"><svg width="14" height="13" viewBox="0 0 14 13" fill="none" stroke={G}><path d="M.5.500h13v12H.5zM3.500 2.500h7v8h-7zM5 4.500h4M5 6.500h4M5 8.500h4" /></svg></ViewButton>
            <ViewButton aria-label="分页预览"><svg width="14" height="13" viewBox="0 0 14 13" fill="none" stroke={G}><path d="M.5.500h13v12H.5zM4.500.500v7h5v-7M7.500.500v7" /></svg></ViewButton>
            <ZoomStep aria-label="缩小"><svg width="9" height="2" viewBox="0 0 9 2"><path d="M0 0h9v2H0z" fill={G} /></svg></ZoomStep>
            <ZoomRange type="range" aria-label="缩放" min={0} max={100} defaultValue={50} />
            <ZoomStep aria-label="放大"><svg width="11" height="11" viewBox="0 0 11 11" stroke={G} strokeWidth="3"><path d="M5.500 0v11M0 5.500h11" /></svg></ZoomStep>
            <ZoomValue>100%</ZoomValue>
          </Status>
        </Window>
      </Desktop>
    </>
  );
}
